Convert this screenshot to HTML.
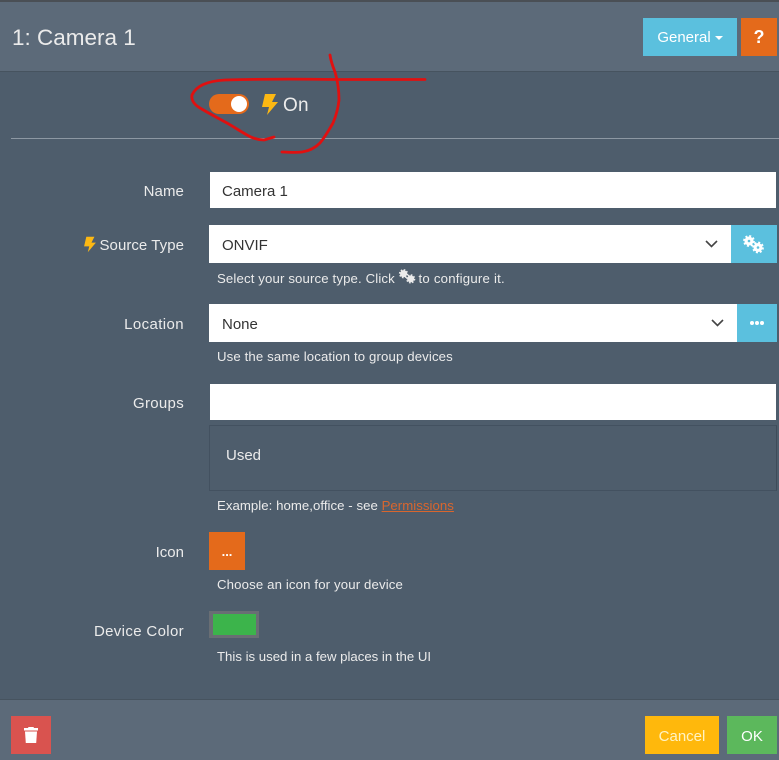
<!DOCTYPE html>
<html>
<head>
<meta charset="utf-8">
<style>
html,body{margin:0;padding:0}
body{width:779px;height:760px;overflow:hidden;background:#4e5d6c;position:relative;font-family:"Liberation Sans",sans-serif;color:#ebebeb}
.a{position:absolute;white-space:nowrap}
.lbl{position:absolute;right:595px;font-size:15px;line-height:20px;color:#ebebeb;white-space:nowrap}
.inp{position:absolute;background:#fff;color:#333;font-size:15px;padding-left:13px;box-sizing:border-box;white-space:nowrap}
.help{position:absolute;left:217px;font-size:13.2px;line-height:18px;color:#ebebeb;white-space:nowrap}
.btn{position:absolute;text-align:center;color:#fff;font-size:15px}
</style>
</head>
<body>
<!-- header -->
<div class="a" style="left:0;top:0;width:779px;height:72px;background:#5c6a79;border-bottom:1px solid #46535f;box-sizing:border-box"></div>
<div class="a" style="left:0;top:0;width:779px;height:2px;background:#4a4f55"></div>
<div class="a" style="left:12px;top:24px;font-size:22.5px;line-height:28px;color:#ebebeb">1: Camera 1</div>
<div class="btn" style="left:643px;top:18px;width:94px;height:38px;line-height:40px;background:#5bc0de;font-size:15px">General<span style="display:inline-block;margin-left:4px;vertical-align:2px;border-top:4px solid #fff;border-left:4px solid transparent;border-right:4px solid transparent"></span></div>
<div class="btn" style="left:741px;top:18px;width:36px;height:38px;line-height:38px;background:#e46a1b;font-size:18px;font-weight:bold">?</div>

<!-- toggle -->
<div class="a" style="left:209px;top:94px;width:40px;height:20px;border-radius:10px;background:#e46a1b"></div>
<div class="a" style="left:231px;top:96px;width:16px;height:16px;border-radius:50%;background:#fff"></div>
<svg class="a" style="left:261px;top:93px" width="18" height="23" viewBox="0 0 18 23"><path d="M4 1H15L11 9H17L6 22L8 14H1Z" fill="#fcb813"/></svg>
<div class="a" style="left:283px;top:95px;font-size:19px;line-height:22px;color:#ebebeb;letter-spacing:.2px">On</div>
<div class="a" style="left:11px;top:138px;width:768px;height:1px;background:#8d98a3"></div>

<!-- Name -->
<div class="lbl" style="top:182px;letter-spacing:.1px">Name</div>
<div class="inp" style="left:210px;top:172px;width:566px;height:36px;line-height:40px;padding-left:12px">Camera 1</div>

<!-- Source Type -->
<div class="lbl" style="top:236px;letter-spacing:.05px"><svg width="14" height="17" viewBox="0 0 18 23" style="vertical-align:-3px;margin-right:3px;margin-left:-1px"><path d="M4 1H15L11 9H17L6 22L8 14H1Z" fill="#fcb813"/></svg>Source Type</div>
<div class="inp" style="left:209px;top:225px;width:522px;height:38px;line-height:42px">ONVIF</div>
<svg class="a" style="left:705px;top:240px" width="13" height="8" viewBox="0 0 13 8"><path d="M1 1L6.500 6.500L12 1" fill="none" stroke="#444" stroke-width="1.600"/></svg>
<div class="a" style="left:731px;top:225px;width:46px;height:38px;background:#5bc0de"></div>
<svg class="a" style="left:743px;top:235px" width="22" height="19" viewBox="0 0 22 19"><g fill="#fff"><circle cx="6" cy="6" r="4.500"/><circle cx="6" cy="6" r="5" fill="none" stroke="#fff" stroke-width="1.800" stroke-dasharray="2.050 1.880"/><circle cx="15" cy="12.500" r="4.500"/><circle cx="15" cy="12.500" r="5" fill="none" stroke="#fff" stroke-width="1.800" stroke-dasharray="2.050 1.880"/></g><circle cx="6" cy="6" r="1.300" fill="#5bc0de"/><circle cx="15" cy="12.500" r="1.300" fill="#5bc0de"/></svg>
<div class="help" style="top:269px;letter-spacing:.14px">Select your source type. Click <svg width="19" height="15" viewBox="0 0 22 19" style="vertical-align:-1px;margin:0 -1px 0 -1px"><g fill="#ebebeb"><circle cx="6" cy="6" r="4.500"/><circle cx="6" cy="6" r="5" fill="none" stroke="#ebebeb" stroke-width="1.800" stroke-dasharray="2.050 1.880"/><circle cx="15" cy="12.500" r="4.500"/><circle cx="15" cy="12.500" r="5" fill="none" stroke="#ebebeb" stroke-width="1.800" stroke-dasharray="2.050 1.880"/></g></svg> <span style="letter-spacing:.22px;margin-left:-1px">to configure it.</span></div>

<!-- Location -->
<div class="lbl" style="top:315px;letter-spacing:.4px">Location</div>
<div class="inp" style="left:209px;top:304px;width:528px;height:38px;line-height:42px">None</div>
<svg class="a" style="left:711px;top:319px" width="13" height="8" viewBox="0 0 13 8"><path d="M1 1L6.500 6.500L12 1" fill="none" stroke="#444" stroke-width="1.600"/></svg>
<div class="a" style="left:737px;top:304px;width:40px;height:38px;background:#5bc0de"></div>
<svg class="a" style="left:750px;top:320px" width="14" height="6" viewBox="0 0 14 6"><circle cx="2" cy="3" r="2" fill="#fff"/><circle cx="7" cy="3" r="2" fill="#fff"/><circle cx="12" cy="3" r="2" fill="#fff"/></svg>
<div class="help" style="top:348px;letter-spacing:.13px">Use the same location to group devices</div>

<!-- Groups -->
<div class="lbl" style="top:394px;letter-spacing:.3px">Groups</div>
<div class="inp" style="left:210px;top:384px;width:566px;height:36px"></div>
<div class="a" style="left:209px;top:425px;width:568px;height:66px;box-sizing:border-box;border:1px solid #435160;border-right-color:#3f4c59"></div>
<div class="a" style="left:226px;top:446px;font-size:15px;line-height:20px;color:#ebebeb">Used</div>
<div class="help" style="top:497px;letter-spacing:.05px">Example: home,office - see <span style="color:#d9662e;text-decoration:underline">Permissions</span></div>

<!-- Icon -->
<div class="lbl" style="top:543px">Icon</div>
<div class="btn" style="left:209px;top:532px;width:36px;height:38px;line-height:40px;background:#e46a1b;font-size:13px;font-weight:bold">...</div>
<div class="help" style="top:576px;letter-spacing:.14px">Choose an icon for your device</div>

<!-- Device color -->
<div class="lbl" style="top:622px;letter-spacing:.35px">Device Color</div>
<div class="a" style="left:209px;top:611px;width:50px;height:27px;box-sizing:border-box;border:3px solid #696e74;border-left-width:4px;background:#3cb44b"></div>
<div class="help" style="top:648px">This is used in a few places in the UI</div>

<!-- footer -->
<div class="a" style="left:0;top:699px;width:779px;height:61px;background:#5c6a79;border-top:1px solid #46535f;box-sizing:border-box"></div>
<div class="a" style="left:11px;top:716px;width:40px;height:38px;background:#d9534f"></div>
<svg class="a" style="left:24px;top:727px" width="14" height="16" viewBox="0 0 14 16"><path d="M4.500 0H9.500L10 1H14V3.500H0V1H4Z" fill="#fff"/><path d="M1 4.500H13L12.200 16H1.800Z" fill="#fff"/></svg>
<div class="btn" style="left:645px;top:716px;width:74px;height:38px;line-height:42px;background:#ffb80c;color:#fff3c4">Cancel</div>
<div class="btn" style="left:727px;top:716px;width:50px;height:38px;line-height:42px;background:#5cb85c">OK</div>

<!-- red annotation -->
<svg class="a" style="left:0;top:0" width="779" height="760" viewBox="0 0 779 760">
<g fill="none" stroke="#e01010" stroke-width="2.800" stroke-linecap="round" stroke-linejoin="round">
<path d="M425 79.500H335C300 79 260 79 225 80C207 81 196 86 192 95C191 101 195 105 200 108C210 114 218 118 227 123C234 127 240 131 247 135C252 138 258 140 264 140L274 137"/>
<path d="M330 55C331 62 333 67 335 72C338 82 339 91 339 100C338 109 336 116 333 123C329 130 325 137 320 143C315 148 309 151 302 152C295 153 288 152 282 152"/>
</g>
</svg>
</body>
</html>
